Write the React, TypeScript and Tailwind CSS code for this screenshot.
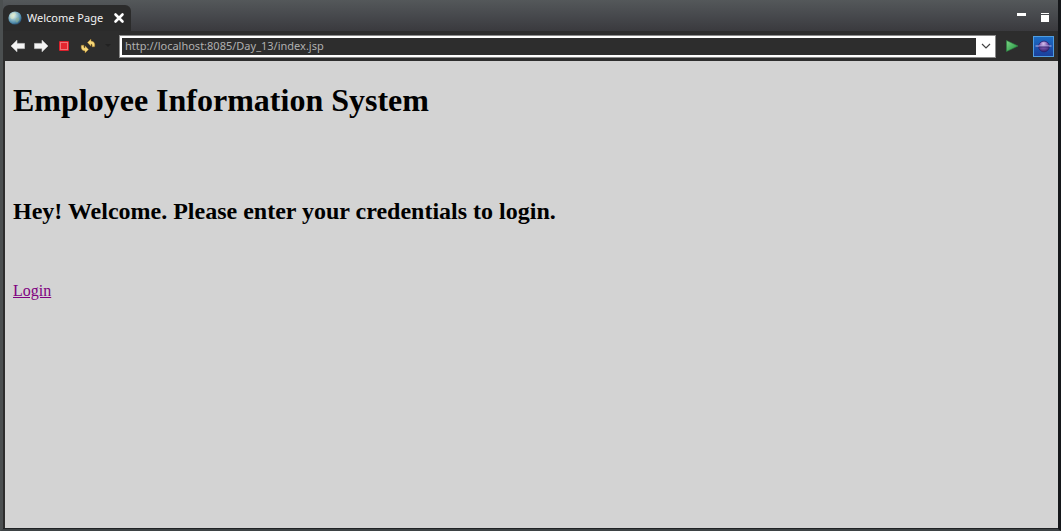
import React from "react";

function GlobeIcon() {
  return (
    <svg className="size-4 shrink-0" viewBox="0 0 16 16" aria-hidden="true">
      <defs>
        <radialGradient id="globe" cx="0.38" cy="0.32" r="0.7">
          <stop offset="0" stopColor="#e2f4f0" />
          <stop offset="0.4" stopColor="#9cc3cc" />
          <stop offset="0.75" stopColor="#5590ae" />
          <stop offset="1" stopColor="#285377" />
        </radialGradient>
      </defs>
      <circle cx="8" cy="8" r="6.6" fill="url(#globe)" />
      <path d="M3 5 Q5 2.5 8 2.5 L9 4.5 L7 6 L7.5 8 L5 9 L3.5 8Z" fill="#e0e9c4" opacity="0.6" />
      <path d="M9 8 L12 7.5 L12.5 10 L10 13 L8.5 11Z" fill="#9cb58b" opacity="0.5" />
    </svg>
  );
}

function CloseIcon() {
  return (
    <svg className="size-3" viewBox="0 0 12 12" aria-hidden="true">
      <path d="M2.5 2.5 L9.5 9.5 M9.5 2.5 L2.5 9.5" stroke="#fff" strokeWidth="2.6" strokeLinecap="round" />
    </svg>
  );
}

function ArrowIcon({ forward = false }: { forward?: boolean }) {
  return (
    <svg className="size-4" viewBox="0 0 16 16" aria-hidden="true">
      <path
        d={forward ? "M15 8 L9 2.2 V5.4 H1.5 V10.6 H9 V13.8Z" : "M1 8 L7 2.2 V5.4 H14.5 V10.6 H7 V13.8Z"}
        fill="#f4f4f4"
        stroke="#d5d5d5"
        strokeWidth="0.6"
        strokeLinejoin="round"
      />
    </svg>
  );
}

function StopIcon() {
  return (
    <svg className="size-4" viewBox="0 0 16 16" aria-hidden="true">
      <rect x="3" y="3" width="10" height="10" rx="1" fill="#d9202c" />
      <rect x="4.5" y="4.5" width="7" height="7" fill="#e5262f" stroke="#ee7478" />
    </svg>
  );
}

function RefreshIcon() {
  return (
    <svg className="size-4" viewBox="0 0 16 16" aria-hidden="true">
      <g fill="#f7d878" stroke="#a87a24" strokeWidth="0.4" strokeLinejoin="round">
        <path d="M7.4 4.6 L11 1 V3.1 C14 3.3 15.4 5.6 14.6 8.8 L12 8.8 C12.4 7 12.2 6.2 11 6.1 V8.2Z" />
        <path d="M8.6 11.4 L5 15 V12.9 C2 12.7 0.6 10.4 1.4 7.2 L4 7.2 C3.6 9 3.8 9.8 5 9.9 V7.8Z" />
      </g>
    </svg>
  );
}

function GoIcon() {
  return (
    <svg className="size-4" viewBox="0 0 16 16" aria-hidden="true">
      <defs>
        <linearGradient id="go" x1="0" y1="0" x2="1" y2="1">
          <stop offset="0" stopColor="#7fd487" />
          <stop offset="0.6" stopColor="#43ac59" />
          <stop offset="1" stopColor="#238040" />
        </linearGradient>
      </defs>
      <path d="M2.5 2.5 L14 8 L2.5 13.5Z" fill="url(#go)" stroke="#2b8743" strokeWidth="0.6" />
    </svg>
  );
}

function BrowserIcon() {
  return (
    <svg className="size-full" viewBox="0 0 19 19" aria-hidden="true">
      <defs>
        <radialGradient id="planet" cx="0.45" cy="0.25" r="0.8">
          <stop offset="0" stopColor="#d6c4ec" />
          <stop offset="0.45" stopColor="#8058b0" />
          <stop offset="1" stopColor="#2a1c62" />
        </radialGradient>
      </defs>
      <circle cx="10" cy="9.5" r="5.4" fill="url(#planet)" stroke="#2a2270" strokeWidth="0.8" />
      <path d="M1.5 9 H17.5" stroke="#b9aee4" strokeWidth="1" />
      <path d="M5 10 H15" stroke="#2a1c62" strokeWidth="0.8" />
    </svg>
  );
}

const tool = "flex size-4 items-center justify-center";

export default function App() {
  return (
    <div className="flex min-h-screen flex-col border-x-3 border-b-2 border-l-[#4b4f50] border-r-[#15171a] border-b-[#3d4244] bg-[#2d2d2d]">
      <header className="flex h-[31px] shrink-0 items-end justify-between bg-linear-to-b from-[#54585a] via-[#47494d] to-[#3a3a3e]">
        <div className="flex h-[26px] items-center gap-1 rounded-t-md bg-[#2b2b2b] pr-1.5 pl-1">
          <GlobeIcon />
          <span className="font-['Noto_Sans',sans-serif] text-[11px] whitespace-nowrap text-[#f2f2f2]">
            Welcome Page
          </span>
          <button type="button" aria-label="Close tab" className="ml-1.5 flex">
            <CloseIcon />
          </button>
        </div>
        <div className="flex h-full items-center gap-3 pr-2">
          <button type="button" aria-label="Minimize" className="flex size-3 items-center justify-center">
            <svg className="size-3" viewBox="0 0 12 12" aria-hidden="true">
              <rect x="3" y="3" width="9" height="3" fill="#fff" />
            </svg>
          </button>
          <button type="button" aria-label="Maximize" className="flex size-3 items-center justify-center">
            <svg className="size-3" viewBox="0 0 12 12" aria-hidden="true">
              <path d="M3 3 H11 V4 H3Z M3 5 H11 V12 H3Z" fill="#fff" />
            </svg>
          </button>
        </div>
      </header>

      <form
        className="flex h-[30px] shrink-0 items-center bg-[#2d2d2d] pr-1 pl-[7px]"
        onSubmit={(e: React.FormEvent) => e.preventDefault()}
      >
        <div className="flex items-center gap-[7px]">
          <button type="button" aria-label="Back" className={tool}>
            <ArrowIcon />
          </button>
          <button type="button" aria-label="Forward" className={tool}>
            <ArrowIcon forward />
          </button>
          <button type="button" aria-label="Stop" className={tool}>
            <StopIcon />
          </button>
          <div className="ml-px flex items-center gap-2">
            <button type="button" aria-label="Refresh" className={tool}>
              <RefreshIcon />
            </button>
            <button type="button" aria-label="Refresh options" className="flex w-2 justify-center">
              <svg className="h-1 w-2" viewBox="0 0 8 4" aria-hidden="true">
                <path d="M1 0 H7 L4 3Z" fill="#222" />
              </svg>
            </button>
          </div>
        </div>
        <div className="ml-[7px] flex h-[23px] min-w-0 flex-1 border border-[#8a8a8a] bg-white p-px">
          <input
            type="text"
            aria-label="Address"
            defaultValue="http://localhost:8085/Day_13/index.jsp"
            className="min-w-0 flex-1 border border-white bg-[#2d2d2d] px-[3px] font-['Noto_Sans',sans-serif] text-[11px] text-[#b0b0b0] outline-none"
          />
          <button type="button" aria-label="Address history" className="flex w-[17px] items-center justify-center">
            <svg className="size-3" viewBox="0 0 12 12" aria-hidden="true">
              <path d="M2 4 L6 8 L10 4" fill="none" stroke="#444" strokeWidth="1.2" />
            </svg>
          </button>
        </div>
        <button type="submit" aria-label="Go" className="ml-2 flex size-4 items-center justify-center">
          <GoIcon />
        </button>
        <button
          type="button"
          aria-label="Open in external browser"
          className="ml-[13px] size-[21px] border border-[#4f9de0] bg-linear-to-b from-[#1c6cc4] to-[#1a3f9c]"
        >
          <BrowserIcon />
        </button>
      </form>

      <main className="ml-0.5 flex-1 bg-[#d3d3d3] px-2 font-['Liberation_Serif',serif] text-black">
        <h1 className="pt-[21px] text-[32px] leading-9 font-bold">Employee Information System</h1>
        <h2 className="mt-[79px] text-2xl leading-7 font-bold">
          Hey! Welcome. Please enter your credentials to login.
        </h2>
        <p className="mt-14 text-base leading-5">
          <a href="#login" className="text-[#800080] underline">
            Login
          </a>
        </p>
      </main>
      <div className="h-px bg-[#1f2224]" />
    </div>
  );
}
